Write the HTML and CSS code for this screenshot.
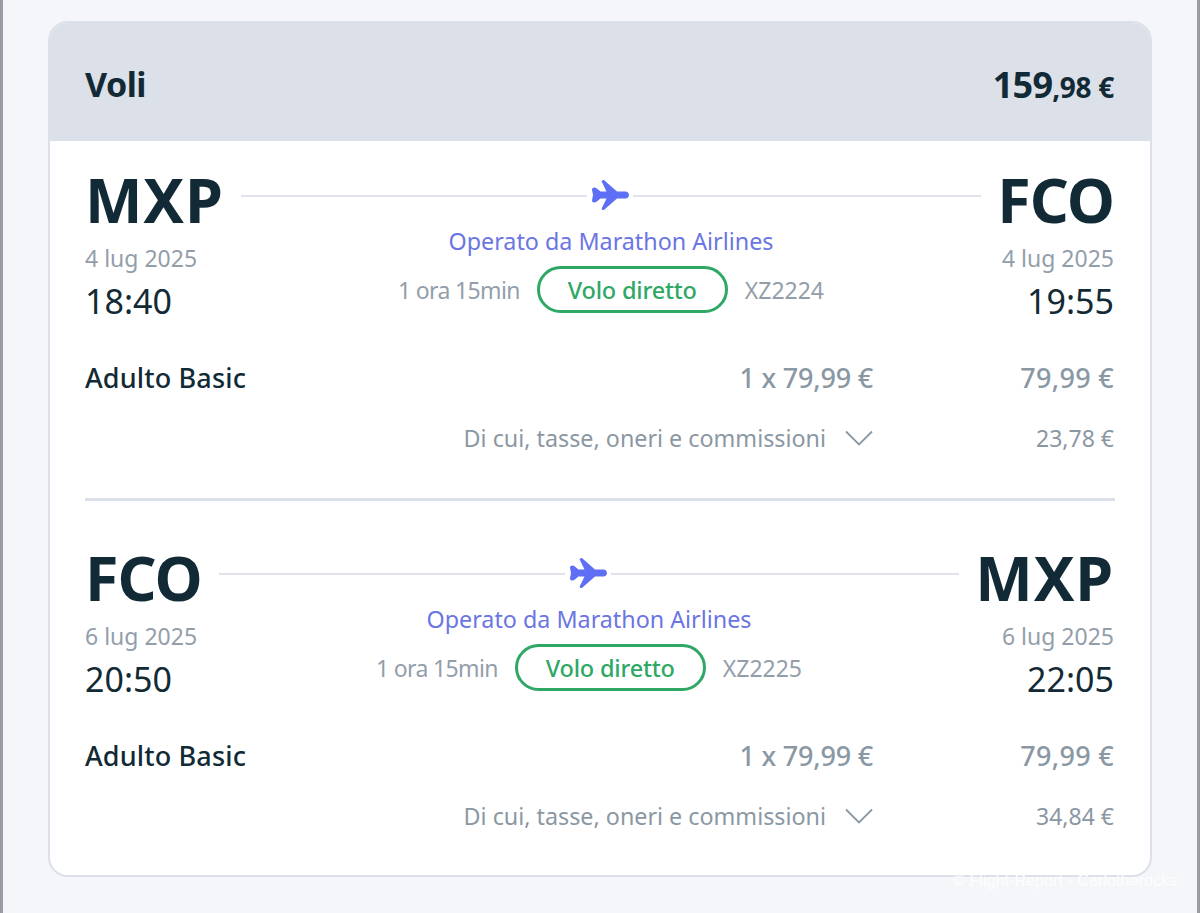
FILE: index.html
```html
<!DOCTYPE html>
<html lang="it">
<head>
<meta charset="utf-8">
<title>Voli</title>
<link rel="stylesheet" href="styles.css">
</head>
<body>
<svg class="defs" width="0" height="0"><defs>
<symbol id="plane" viewBox="0 0 38 32"><path d="M13.200 1.200c-1.300-.9-3 .5-2.300 1.900L15.500 12.500H9.500L5.500 9.200C3.800 7.800 .8 8.600 1 10.800L2 16 1 21.200C.8 23.400 3.800 24.200 5.500 22.800L9.500 19.500H15.500L10.900 28.900c-.7 1.400 1 2.800 2.300 1.900L26 19.500h8.500c1.900 0 3.500-1.600 3.500-3.500s-1.600-3.500-3.500-3.500H26z"/></symbol>
<symbol id="chev" viewBox="0 0 28 16"><path d="M1 1.500 14 14.500 27 1.500"/></symbol>
</defs></svg>
<main class="card">
<header class="card-head"><h1>Voli</h1><div class="total">159<small>,98 €</small></div></header>
<div class="card-body">
<section class="segment">
<div class="route">
<div class="end"><div class="code wide">MXP</div><div class="date">4 lug 2025</div><div class="time">18:40</div></div>
<div class="mid">
<div class="line"><svg class="plane"><use href="#plane"/></svg></div>
<div class="oper">Operato da Marathon Airlines</div>
<div class="meta"><span class="dur">1 ora 15min</span><span class="pill">Volo diretto</span><span>XZ2224</span></div>
</div>
<div class="end right"><div class="code tight">FCO</div><div class="date">4 lug 2025</div><div class="time">19:55</div></div>
</div>
<div class="fare"><span class="pax">Adulto Basic</span><span class="unit">1 x 79,99 €</span><span class="sum">79,99 €</span></div>
<div class="tax"><span class="tax-label">Di cui, tasse, oneri e commissioni<svg class="chev"><use href="#chev"/></svg></span><span class="tax-sum">23,78 €</span></div>
</section>
<hr class="divider">
<section class="segment">
<div class="route">
<div class="end"><div class="code tight">FCO</div><div class="date">6 lug 2025</div><div class="time">20:50</div></div>
<div class="mid">
<div class="line"><svg class="plane"><use href="#plane"/></svg></div>
<div class="oper">Operato da Marathon Airlines</div>
<div class="meta"><span class="dur">1 ora 15min</span><span class="pill">Volo diretto</span><span>XZ2225</span></div>
</div>
<div class="end right"><div class="code wide">MXP</div><div class="date">6 lug 2025</div><div class="time">22:05</div></div>
</div>
<div class="fare"><span class="pax">Adulto Basic</span><span class="unit">1 x 79,99 €</span><span class="sum">79,99 €</span></div>
<div class="tax"><span class="tax-label">Di cui, tasse, oneri e commissioni<svg class="chev"><use href="#chev"/></svg></span><span class="tax-sum">34,84 €</span></div>
</section>
</div>
</main>
<div class="watermark">© Flight-Report - Carlotherocks</div>
</body>
</html>
```
FILE: styles.css
```css
* { box-sizing: border-box; }
html, body { margin: 0; height: 913px; overflow: hidden; }
body {
  position: relative;
  padding: 21px 44px 0 45px;
  background: #f4f6fa;
  border-left: 3px solid #9b9ba6;
  border-right: 3px solid #9b9ba6;
  font-family: "Noto Sans", "Open Sans", sans-serif;
  color: #122a35;
}
.defs { position: absolute; }
.card {
  width: 1104px;
  height: 856px;
  background: #fff;
  border: 2px solid #dce0e9;
  border-radius: 20px;
  overflow: hidden;
}
.card-head {
  height: 120px;
  margin: -2px -2px 0;
  padding: 6px 38px 0 37px;
  background: #dce0e9;
  display: flex;
  justify-content: space-between;
  align-items: center;
}
.card-head h1 { margin: 0; font-size: 34px; font-weight: 700; letter-spacing: -.5px; line-height: 44px; }
.total { margin-top: 4px; font-size: 36px; font-weight: 700; letter-spacing: -.8px; line-height: 44px; }
.total small { font-size: 28px; letter-spacing: -.3px; }
.card-body { padding: 0 35px; }
.segment { height: 357px; padding: 24px 1px 0 0; }
.route { display: flex; gap: 19px; }
.end { display: flex; flex-direction: column; }
.end.right { align-items: flex-end; }
.code { font-size: 61px; font-weight: 700; line-height: 70px; white-space: nowrap; }
.code.wide { letter-spacing: .8px; }
.code.tight { letter-spacing: -1px; }
.date { font-size: 23px; line-height: 30px; color: #939eaa; margin-top: 8px; }
.time { font-size: 34px; line-height: 44px; margin-top: 6px; }
.mid { flex: 1; display: flex; flex-direction: column; align-items: center; margin: 0 -3px 0 -2px; padding-top: 30px; min-width: 0; }
.line { width: 100%; height: 2px; background: #e0e3ea; display: flex; justify-content: center; align-items: center; }
.plane { width: 46px; height: 32px; margin: -2px 0 0 -3px; padding: 0 4px; background: #fff; fill: #5f6ff5; flex: none; }
.oper { font-size: 23.300px; line-height: 30px; color: #6b75e3; margin-top: 29px; }
.meta { display: flex; align-items: center; gap: 17px; margin-top: 10px; font-size: 23px; color: #939eaa; }
.dur { letter-spacing: -.65px; }
.pill { height: 47px; width: 191px; display: flex; align-items: center; justify-content: center; border: 3px solid #2fa866; border-radius: 24px; color: #2fa866; font-size: 23.500px; font-weight: 500; letter-spacing: -.2px; }
.fare { display: flex; align-items: center; margin-top: 36px; height: 36px; font-size: 27px; font-weight: 500; }
.pax { flex: 1; color: #122a35; letter-spacing: .15px; }
.unit { color: #8a98a4; letter-spacing: -.2px; }
.sum { width: 241px; text-align: right; color: #8a98a4; letter-spacing: .3px; }
.tax { display: flex; align-items: center; margin-top: 26px; height: 34px; font-size: 23.300px; color: #8a98a4; }
.tax-label { flex: 1; display: flex; justify-content: flex-end; align-items: center; gap: 19px; }
.chev { width: 28px; height: 16px; fill: none; stroke: #8a98a4; stroke-width: 1.800; }
.tax-sum { width: 241px; text-align: right; font-size: 23px; }
.divider { margin: 0 0 18px; border: 0; height: 3px; background: #dce0e9; width: 1030px; }
.watermark { position: absolute; left: 950px; top: 870px; font-family: "Liberation Sans", sans-serif; font-size: 16.200px; line-height: 20px; color: rgba(255,255,255,.9); white-space: nowrap; }
```
